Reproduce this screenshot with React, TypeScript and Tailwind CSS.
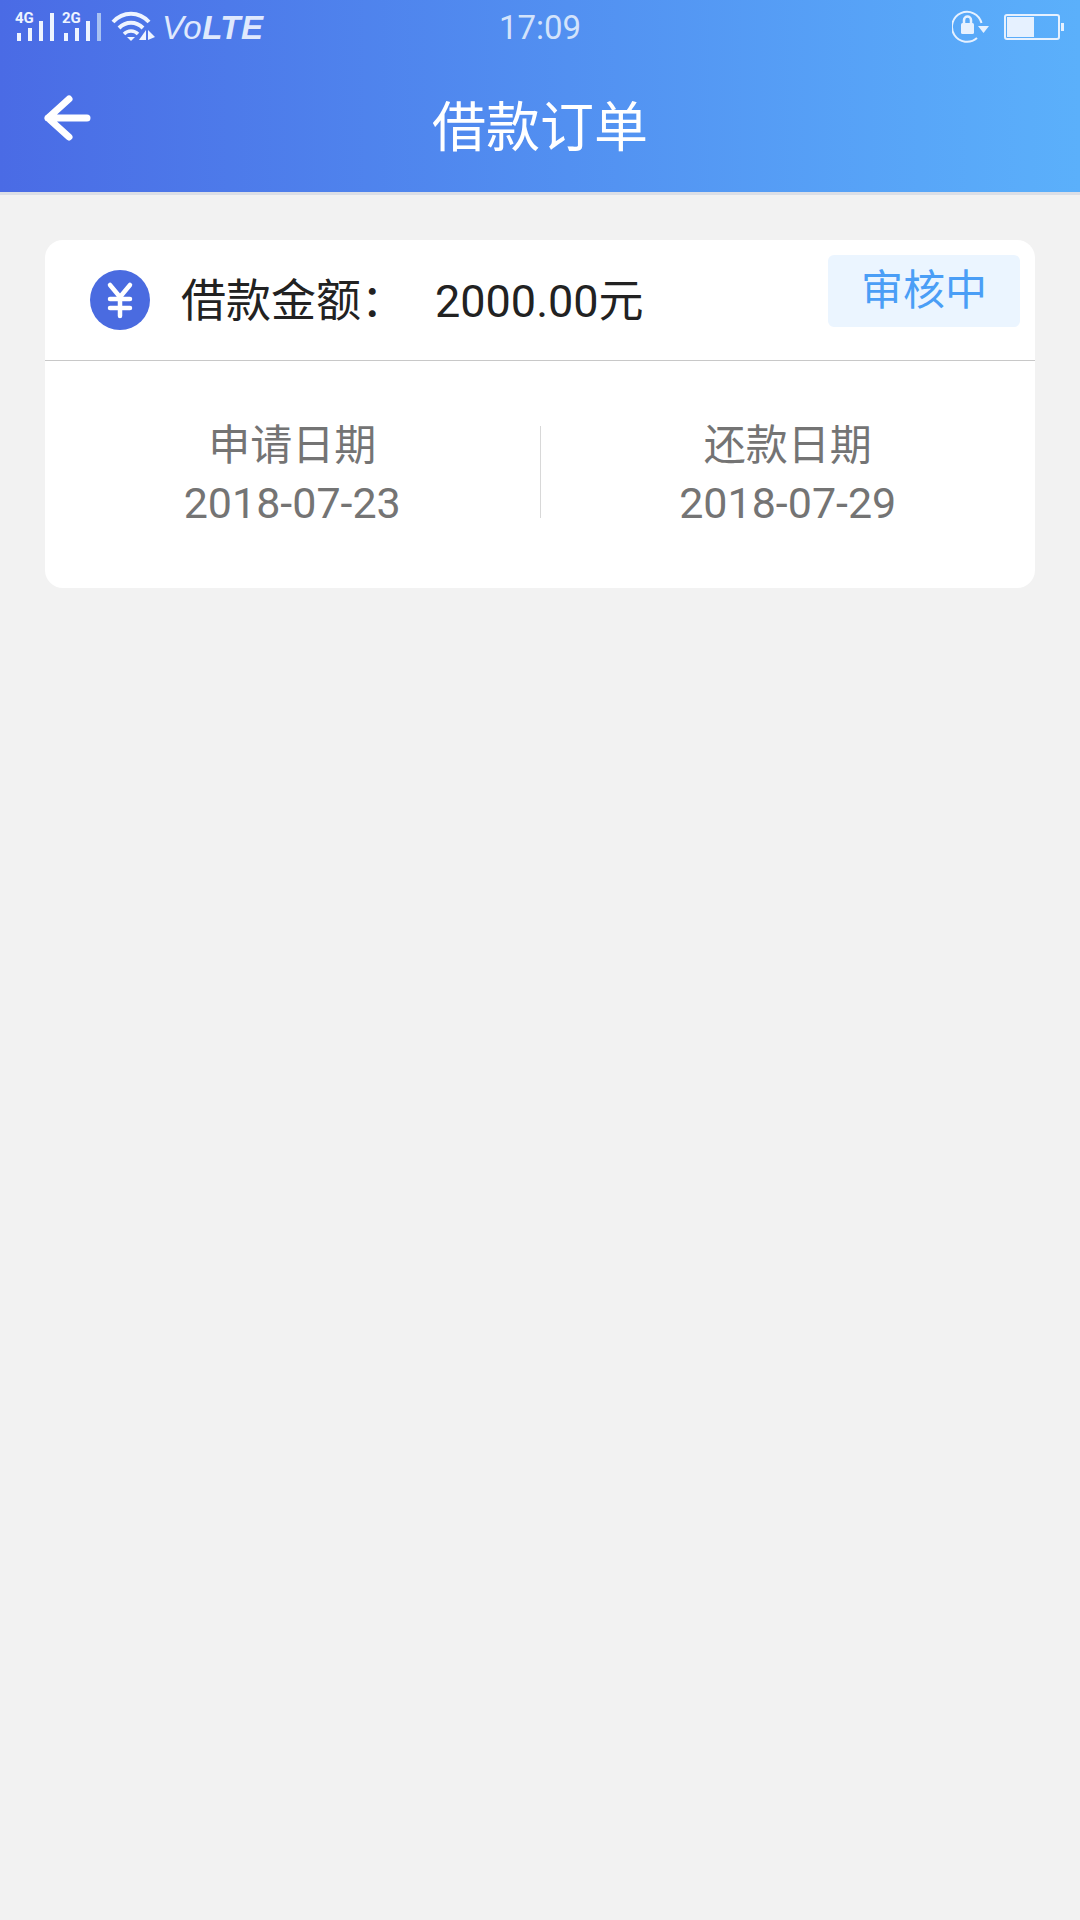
const Signal = ({ label, dim }: { label: string; dim?: boolean }) => (
  <svg width="44" height="38" viewBox="0 -3 44 38" className="block">
    <text x="0" y="12" fontSize="15" fontWeight="700" fill="#eef4ff" fontFamily="Roboto, sans-serif">
      {label}
    </text>
    <rect x="2" y="22" width="4" height="8" fill="#eef4ff" />
    <rect x="13" y="17" width="4" height="13" fill="#eef4ff" />
    <rect x="24" y="10" width="4" height="20" fill="#eef4ff" />
    <rect x="35" y="2" width="4" height="28" fill={dim ? "#a9c2f2" : "#eef4ff"} />
  </svg>
);

const Wifi = () => (
  <svg width="46" height="32" viewBox="0 0 46 32" fill="none" className="block">
    <path d="M2 11C12 0 28 0 38 11" stroke="#eef4ff" strokeWidth="4" />
    <path d="M8 17C15 10 25 10 32 17" stroke="#eef4ff" strokeWidth="4" />
    <path d="M13 23C17 19 23 19 27 23" stroke="#eef4ff" strokeWidth="3.500" />
    <path d="M16 26H24L20 30Z" fill="#eef4ff" />
    <path d="M35 19V29H28Z" fill="#eef4ff" />
    <path d="M37 19L44 26L37 29Z" fill="#eef4ff" />
  </svg>
);

const RotationLock = () => (
  <svg width="37" height="36" viewBox="0 0 37 36" fill="none" className="block">
    <path d="M29.500 14A15 15 0 1 0 25 29" stroke="#e6f1ff" strokeWidth="2" />
    <path d="M26 17H37L31.500 24Z" fill="#e6f1ff" />
    <path d="M12 14V11A3.500 3.500 0 0 1 19 11V14" stroke="#e6f1ff" strokeWidth="2.500" />
    <rect x="9" y="14" width="13" height="11" rx="1.500" fill="#e6f1ff" />
  </svg>
);

const Battery = () => (
  <div className="flex items-center">
    <div className="h-[26px] w-[56px] rounded-[3px] border-2 border-[#e6f1ff] p-[1px]">
      <div className="h-full w-[27px] bg-[#e6f1ff]" />
    </div>
    <div className="ml-[1px] h-[8px] w-[3px] bg-[#e6f1ff]" />
  </div>
);

const StatusBar = () => (
  <div className="relative flex h-[54px] items-center justify-between pl-[15px] pr-[16px]">
    <div className="flex items-center">
      <div className="flex gap-[3px]">
        <Signal label="4G" />
        <Signal label="2G" dim />
      </div>
      <div className="ml-[5px]">
        <Wifi />
      </div>
      <span className="ml-[5px] text-[33px] leading-none tracking-[0.5px] text-[#dfe9fd] italic [font-family:'Liberation_Sans',sans-serif]">
        Vo<span className="font-bold">LTE</span>
      </span>
    </div>
    <span className="absolute left-0 right-0 text-center text-[33px] leading-none text-[#d3e3fb]">17:09</span>
    <div className="flex items-center gap-[15px]">
      <RotationLock />
      <Battery />
    </div>
  </div>
);

const DateCol = ({ label, date }: { label: string; date: string }) => (
  <div className="flex flex-1 flex-col items-center text-[#747474]">
    <span className="text-[42px] leading-[59px]">{label}</span>
    <span className="text-[43px] leading-[56px]">{date}</span>
  </div>
);

export default function App() {
  return (
    <div className="flex min-h-[1920px] w-[1080px] flex-col bg-[#f2f2f2] [font-family:Roboto,'Noto_Sans_CJK_SC',sans-serif]">
      <header className="h-[195px] border-b-[3px] border-[#dcdfe6] bg-gradient-to-r from-[#4a6be5] to-[#5bb0fb]">
        <StatusBar />
        <div className="relative flex h-[138px] items-center justify-center pt-[11px]">
          <svg width="48" height="48" viewBox="0 0 48 48" fill="none" className="absolute left-[43px] top-[40px]">
            <path
              d="M26 5L5 24L26 43M5 24H44"
              stroke="#ffffff"
              strokeWidth="7"
              strokeLinecap="round"
              strokeLinejoin="round"
            />
          </svg>
          <h1 className="text-[54px] leading-none font-normal text-white">借款订单</h1>
        </div>
      </header>

      <main className="px-[45px] pt-[45px]">
        <section className="h-[348px] rounded-[18px] bg-white">
          <div className="flex h-[121px] items-center border-b border-[#c8c8c8] pl-[45px] pr-[15px]">
            <div className="flex h-[60px] w-[60px] items-center justify-center rounded-full bg-[#4a6be0]">
              <svg width="30" height="38" viewBox="0 0 30 38" fill="none">
                <path
                  d="M5 4L15 16L25 4M5 18H25M5 27H25M15 16V35"
                  stroke="#ffffff"
                  strokeWidth="4.500"
                  strokeLinecap="round"
                  strokeLinejoin="round"
                />
              </svg>
            </div>
            <span className="ml-[31px] w-[254px] pt-[2px] text-[45px] leading-none text-[#222222]">借款金额：</span>
            <span className="pt-[2px] text-[45px] leading-none text-[#222222]">2000.00元</span>
            <span className="mb-[18px] ml-auto flex h-[72px] w-[192px] items-center justify-center rounded-[6px] bg-[#ebf5ff] text-[42px] leading-none text-[#4a9ef6]">
              审核中
            </span>
          </div>
          <div className="flex items-start pt-[55px]">
            <DateCol label="申请日期" date="2018-07-23" />
            <div className="mt-[10px] h-[92px] w-px bg-[#d8d8d8]" />
            <DateCol label="还款日期" date="2018-07-29" />
          </div>
        </section>
      </main>
    </div>
  );
}
